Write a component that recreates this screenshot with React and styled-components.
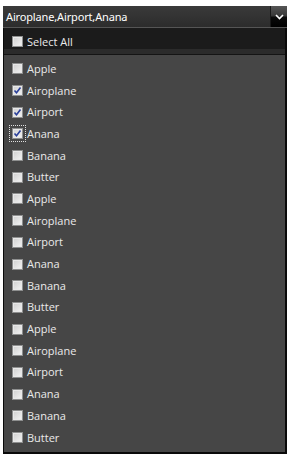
import React from "react";
import styled, { createGlobalStyle } from "styled-components";

const Global = createGlobalStyle`
  html, body { margin: 0; padding: 0; background: #ffffff; }
  body { font-family: "Open Sans", "Noto Sans", sans-serif; }
`;

const Wrap = styled.div`
  padding: 6px 0 0 3px;
  width: 284px;
`;

const Header = styled.div`
  display: flex;
  height: 21px;
  background: linear-gradient(#3a3a3a, #2c2c2c);
  border-bottom: 1px solid #555;
`;

const HeaderText = styled.div`
  flex: 1;
  color: #ffffff;
  font-family: "Noto Sans", sans-serif;
  font-size: 11px;
  letter-spacing: -0.15px;
  line-height: 21px;
  padding-left: 3px;
  white-space: nowrap;
  overflow: hidden;
`;

const Toggle = styled.div`
  width: 16px;
  display: flex;
  align-items: center;
  justify-content: center;
  background: linear-gradient(#555 0%, #3a3a3a 45%, #0a0a0a 55%, #000 100%);
  border-left: 1px solid #1a1a1a;
`;

const Popup = styled.div`
  border-right: 2px solid #0a0a0a;
  border-bottom: 2px solid #0a0a0a;
  border-left: 1px solid #0a0a0a;
  background: #464646;
`;

const TopBand = styled.div`
  background: #1b1b1b;
  height: 21px;
  display: flex;
  align-items: flex-end;
  padding-left: 8px;
`;

const SubBand = styled.div`
  height: 5px;
  background: #2b2b2b;
  border-bottom: 1px solid #141414;
`;

const List = styled.div`
  padding: 3px 0 4px;
`;

const Row = styled.div`
  height: ${(p) => (p.$h ? p.$h : "21.7px")};
  display: flex;
  align-items: center;
  padding-left: ${(p) => (p.$flush ? "0" : "8px")};
  gap: 4px;
`;

const Box = styled.div`
  position: relative;
  width: 11px;
  height: 11px;
  box-sizing: border-box;
  border: 1px solid #8e8f8f;
  background: linear-gradient(135deg, #cfcfcf, #f4f4f4);
  box-shadow: inset 0 0 0 1px #e8e8e8;
  flex: none;
  outline: ${(p) => (p.$focus ? "1px dotted #e0e0e0" : "none")};
  outline-offset: 2px;
`;

const Label = styled.span`
  color: #eaeaea;
  font-size: 11px;
  line-height: 14px;
  white-space: nowrap;
`;

const Check = () => (
  <svg width="9" height="9" viewBox="0 0 9 9" style={{ position: "absolute", left: 0, top: 0 }}>
    <path d="M1.5 4.5 L3.5 6.8 L7.5 1.5" fill="none" stroke="#2a3f9a" strokeWidth="1.6" />
  </svg>
);

const Item = ({ label, checked, focus }) => (
  <Row>
    <Box $focus={focus}>{checked && <Check />}</Box>
    <Label>{label}</Label>
  </Row>
);

const names = ["Apple", "Airoplane", "Airport", "Anana", "Banana", "Butter"];
const items = [...names, ...names, ...names];

export default function App() {
  return (
    <>
      <Global />
      <Wrap>
        <Header>
          <HeaderText>Airoplane,Airport,Anana</HeaderText>
          <Toggle>
            <svg width="9" height="6" viewBox="0 0 9 6">
              <path d="M1 1 L4.5 4.5 L8 1" fill="none" stroke="#ffffff" strokeWidth="1.6" />
            </svg>
          </Toggle>
        </Header>
        <Popup>
          <TopBand>
            <Row $flush $h="15px">
              <Box />
              <Label>Select All</Label>
            </Row>
          </TopBand>
          <SubBand />
          <List>
            {items.map((n, i) => (
              <Item key={i} label={n} checked={i >= 1 && i <= 3} focus={i === 3} />
            ))}
          </List>
        </Popup>
      </Wrap>
    </>
  );
}
